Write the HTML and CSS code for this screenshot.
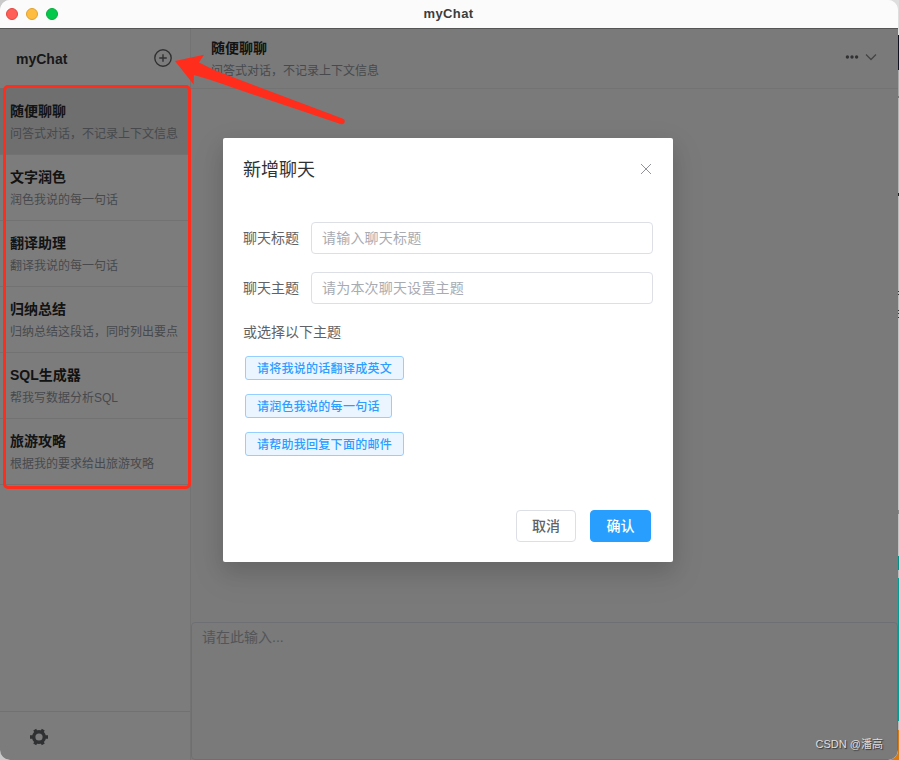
FILE: index.html
```
<!DOCTYPE html>
<html lang="zh-CN">
<head>
    <meta charset="UTF-8">
    <meta name="viewport" content="width=device-width, initial-scale=1.0">
    <title>myChat</title>
    <link rel="stylesheet" href="styles.css">
</head>
<body>
    <!-- Desktop edge behind the window -->
    <div class="desktop-edge"></div>

    <div class="window">
        <div class="titlebar">
            <div class="lights">
                <span class="light red"></span>
                <span class="light yellow"></span>
                <span class="light green"></span>
            </div>
            <div class="window-title">myChat</div>
        </div>

        <div class="app">
            <aside class="sidebar">
                <div class="sidebar-header">
                    <span class="brand">myChat</span>
                    <svg class="icon-add" viewBox="0 0 18 18" width="18" height="18">
                        <circle cx="9" cy="9" r="8.2"/>
                        <path d="M9 5.2v7.6M5.2 9h7.6"/>
                    </svg>
                </div>
                <div class="chat-list">
                    <div class="chat-item active">
                        <div class="chat-name">随便聊聊</div>
                        <div class="chat-desc">问答式对话，不记录上下文信息</div>
                    </div>
                    <div class="chat-item">
                        <div class="chat-name">文字润色</div>
                        <div class="chat-desc">润色我说的每一句话</div>
                    </div>
                    <div class="chat-item">
                        <div class="chat-name">翻译助理</div>
                        <div class="chat-desc">翻译我说的每一句话</div>
                    </div>
                    <div class="chat-item">
                        <div class="chat-name">归纳总结</div>
                        <div class="chat-desc">归纳总结这段话，同时列出要点</div>
                    </div>
                    <div class="chat-item">
                        <div class="chat-name">SQL生成器</div>
                        <div class="chat-desc">帮我写数据分析SQL</div>
                    </div>
                    <div class="chat-item">
                        <div class="chat-name">旅游攻略</div>
                        <div class="chat-desc">根据我的要求给出旅游攻略</div>
                    </div>
                </div>
                <div class="sidebar-footer">
                    <svg class="icon-gear" viewBox="0 0 18 18" width="18" height="18">
                        <circle cx="9" cy="9" r="5.3"/>
                        <path d="M0 9h3M15 9h3M4.7 1.6l1.5 2.5M11.8 13.9l1.5 2.5M13.3 1.6l-1.5 2.5M6.2 13.9l-1.5 2.5"/>
                    </svg>
                </div>
            </aside>

            <main class="main">
                <div class="main-header">
                    <div>
                        <div class="chat-name">随便聊聊</div>
                        <div class="chat-desc">问答式对话，不记录上下文信息</div>
                    </div>
                    <div class="header-actions">
                        <svg class="icon-more" viewBox="0 0 14 6" width="14" height="6">
                            <circle cx="2.4" cy="3" r="1.7"/>
                            <circle cx="7" cy="3" r="1.7"/>
                            <circle cx="11.6" cy="3" r="1.7"/>
                        </svg>
                        <svg class="icon-down" viewBox="0 0 12 8" width="12" height="8">
                            <path d="M1 1.5l5 5 5-5"/>
                        </svg>
                    </div>
                </div>
                <div class="messages"></div>
                <textarea class="message-input" placeholder="请在此输入..."></textarea>
            </main>

            <div class="overlay"></div>
        </div>
    </div>

    <!-- New chat dialog -->
    <div class="dialog">
        <div class="dialog-header">
            <span class="dialog-title">新增聊天</span>
            <svg class="icon-close" viewBox="0 0 12 12" width="12" height="12">
                <path d="M1 1l10 10M11 1L1 11"/>
            </svg>
        </div>
        <form class="dialog-body">
            <div class="form-item">
                <label for="title">聊天标题</label>
                <input id="title" type="text" placeholder="请输入聊天标题">
            </div>
            <div class="form-item">
                <label for="topic">聊天主题</label>
                <input id="topic" type="text" placeholder="请为本次聊天设置主题">
            </div>
            <div class="form-tip">或选择以下主题</div>
            <div class="tags">
                <button type="button" class="tag">请将我说的话翻译成英文</button>
                <button type="button" class="tag">请润色我说的每一句话</button>
                <button type="button" class="tag">请帮助我回复下面的邮件</button>
            </div>
        </form>
        <div class="dialog-footer">
            <button class="btn">取消</button>
            <button class="btn primary">确认</button>
        </div>
    </div>

    <!-- Annotations -->
    <div class="mark-box"></div>
    <svg class="mark-arrow" viewBox="0 0 175 75" width="175" height="75">
        <path d="M1 11L30 4.7L25 12.5Q32 16 40 20L169 68.8Q171.500 70 170.500 72.500Q169.500 74.800 166.500 74L60 38Q35 29 20 25L19.600 34.500Z"/>
    </svg>
    <div class="watermark">CSDN @潘高</div>
</body>
</html>
```
FILE: styles.css
```
* {
    box-sizing: border-box;
}
body {
    font-family: "Liberation Sans", "Noto Sans CJK SC", sans-serif;
    margin: 0;
    height: 760px;
    overflow: hidden;
    position: relative;
    background-color: #c9c9c9;
}
button, input, textarea {
    font-family: inherit;
}

/* Strip of the desktop on the right */
.desktop-edge {
    position: absolute;
    top: 0;
    right: 0;
    width: 12px;
    height: 760px;
    background: linear-gradient(#dedede 0 35px, #10131f 35px 70px, #aaa 70px 96px, #777 96px 98px, #b5b5b5 98px 193px, #222 193px 196px, #bbb 196px 291px, #333 291px 292px, #bbb 292px 294px, #333 294px 295px, #bbb 295px 310px, #333 310px 311px, #bbb 311px 313px, #333 313px 314px, #bbb 314px 317px, #333 317px 318px, #c4c4c4 318px 510px, #888 510px 514px, #c4c4c4 514px 556px, #008f87 556px 570px, #bbb 570px 578px, #009b93 578px 721px, #bbb 721px 730px, #d67a14 730px);
}

.window {
    position: relative;
    width: 898px;
    height: 760px;
    display: flex;
    flex-direction: column;
    border-radius: 10px;
    overflow: hidden;
    background-color: #f5f5f5;
}
.titlebar {
    height: 28px;
    display: grid;
    grid-template-columns: 1fr auto 1fr;
    align-items: center;
    padding: 0 7px 0 6px;
    background-color: #fbfbfb;
}
.lights {
    display: flex;
    gap: 8px;
}
.light {
    width: 12px;
    height: 12px;
    border-radius: 50%;
}
.red {
    background-color: #ff5f57;
    border: 1px solid #e2463f;
}
.yellow {
    background-color: #febc40;
    border: 1px solid #dfa12f;
}
.green {
    background-color: #04c84b;
    border: 1px solid #05ad3d;
}
.window-title {
    padding-bottom: 2px;
    font-size: 13px;
    font-weight: bold;
    color: #3c3c3c;
    letter-spacing: 0.4px;
}

.app {
    flex: 1;
    display: flex;
    position: relative;
    min-height: 0;
}
.overlay {
    position: absolute;
    inset: 0;
    background-color: rgba(0, 0, 0, 0.5);
    border-top: 1px solid rgba(0, 0, 0, 0.3);
}

.sidebar {
    width: 191px;
    display: flex;
    flex-direction: column;
    background-color: #f9f9f9;
    border-right: 1px solid #e6e6e8;
}
.sidebar-header {
    height: 60px;
    display: flex;
    align-items: center;
    justify-content: space-between;
    padding: 0 18px 0 16px;
}
.brand {
    padding-top: 2px;
    font-size: 14px;
    font-weight: bold;
    color: #303133;
}
.icon-add {
    fill: none;
    stroke: #606266;
    stroke-width: 1.4;
}
.chat-list {
    flex: 1;
}
.chat-item {
    height: 66px;
    padding: 12px 10px 0;
    border-bottom: 1px solid #e4e4e6;
}
.chat-item.active {
    height: 67px;
    background-color: #dedede;
}
.chat-name {
    font-size: 14px;
    line-height: 22px;
    font-weight: bold;
    color: #262626;
}
.chat-item:not(.active) .chat-name {
    margin-top: -1px;
}
.chat-desc {
    padding-top: 1px;
    font-size: 12px;
    line-height: 22px;
    color: #909399;
    white-space: nowrap;
}
.sidebar-footer {
    height: 49px;
    padding: 16px 30px;
    border-top: 1px solid #e2e2e4;
}
.icon-gear {
    display: block;
    fill: none;
    stroke: #606266;
    stroke-width: 3.4;
}

.main {
    flex: 1;
    display: flex;
    flex-direction: column;
    min-width: 0;
}
.main-header {
    height: 61px;
    display: flex;
    justify-content: space-between;
    padding: 9px 21px 0 20px;
    border-bottom: 1px solid #e6e6e8;
}
.header-actions {
    display: flex;
    align-items: center;
    gap: 6px;
    height: 40px;
}
.icon-more {
    fill: #606266;
}
.icon-down {
    fill: none;
    stroke: #85878c;
    stroke-width: 1.3;
}
.messages {
    flex: 1;
}
.message-input {
    display: block;
    height: 138px;
    width: 100%;
    padding: 4px 10px;
    font-size: 14px;
    line-height: 20px;
    resize: none;
    background-color: #f4f4f4;
    border: 1px solid #dcdfe6;
    border-radius: 4px;
}
.message-input::placeholder {
    color: #a8abb2;
}

.dialog {
    position: absolute;
    left: 223px;
    top: 138px;
    width: 450px;
    height: 424px;
    display: flex;
    flex-direction: column;
    background-color: #fff;
    border-radius: 2px;
    box-shadow: 0 12px 32px 4px rgba(0, 0, 0, 0.08), 0 8px 20px rgba(0, 0, 0, 0.1);
}
.dialog-header {
    display: flex;
    align-items: center;
    justify-content: space-between;
    height: 62px;
    padding: 0 21px 0 20px;
}
.dialog-title {
    padding-bottom: 2px;
    font-size: 18px;
    color: #303133;
}
.icon-close {
    fill: none;
    stroke: #909399;
    stroke-width: 1;
}
.dialog-body {
    flex: 1;
    padding: 22px 20px 0;
    font-size: 14px;
    color: #606266;
}
.form-item {
    display: flex;
    align-items: center;
    gap: 12px;
    margin-bottom: 18px;
}
.form-item label {
    padding-bottom: 2px;
}
.form-item input {
    flex: 1;
    height: 32px;
    padding: 1px 10px;
    font-size: 14px;
    letter-spacing: 0.2px;
    border: 1px solid #dcdfe6;
    border-radius: 4px;
}
.form-item input::placeholder {
    color: #a8abb2;
}
.form-tip {
    line-height: 20px;
}
.tags {
    display: flex;
    flex-direction: column;
    align-items: flex-start;
    gap: 14px;
    padding: 14px 2px 0;
}
.tag {
    height: 24px;
    padding: 0 11px 2px;
    font-size: 12px;
    font-weight: 500;
    letter-spacing: 0.27px;
    color: #2c9eff;
    background-color: #eaf5ff;
    border: 1px solid #95cfff;
    border-radius: 3px;
}
.dialog-footer {
    display: flex;
    justify-content: flex-end;
    gap: 14px;
    padding: 0 22px 20px;
}
.btn {
    width: 60px;
    height: 32px;
    padding: 0 0 2px;
    font-size: 14px;
    font-weight: 500;
    color: #606266;
    background-color: #fff;
    border: 1px solid #dcdfe6;
    border-radius: 4px;
}
.btn.primary {
    width: 61px;
    color: #fff;
    background-color: #289fff;
    border-color: #289fff;
}

.mark-box {
    position: absolute;
    left: 3px;
    top: 85px;
    width: 188px;
    height: 404px;
    border: 3px solid #ff2d1c;
    border-radius: 5px;
}
.mark-arrow {
    position: absolute;
    left: 174px;
    top: 50px;
    fill: #ff2d1c;
}
.watermark {
    position: absolute;
    right: 16px;
    bottom: 7px;
    font-family: "Liberation Sans", "Noto Sans CJK SC", sans-serif;
    font-size: 11px;
    line-height: 18px;
    color: #ddd;
    text-shadow: 1px 1px 1px #333;
}
```
